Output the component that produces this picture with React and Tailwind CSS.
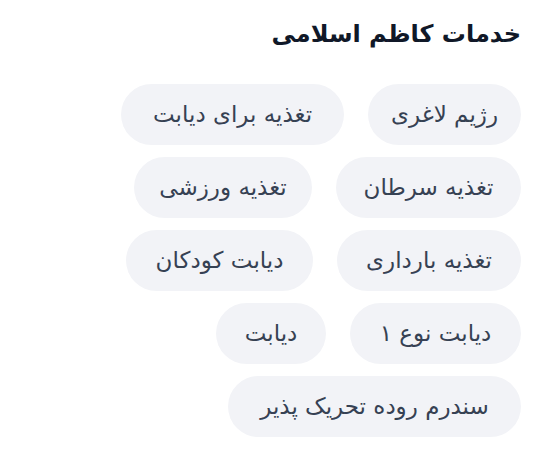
import React from 'react'

const services = [
  { name: 'رژیم لاغری', w: 'w-[153px]' },
  { name: 'تغذیه برای دیابت', w: 'w-[223px]' },
  { name: 'تغذیه سرطان', w: 'w-[185px]' },
  { name: 'تغذیه ورزشی', w: 'w-[178px]' },
  { name: 'تغذیه بارداری', w: 'w-[184px]' },
  { name: 'دیابت کودکان', w: 'w-[187px]' },
  { name: 'دیابت نوع ۱', w: 'w-[171px]' },
  { name: 'دیابت', w: 'w-[110px]' },
  { name: 'سندرم روده تحریک پذیر', w: 'w-[293px]' },
]

export default function App() {
  return (
    <div dir="rtl" className="min-h-screen bg-white px-[18px] pt-4" style={{ fontFamily: '"DejaVu Sans", sans-serif' }}>
      <h2 className="text-2xl leading-9 font-bold text-gray-900">خدمات کاظم اسلامی</h2>
      <div className="mt-8 flex max-w-[401px] flex-wrap gap-x-6 gap-y-3">
        {services.map((s) => (
          <span
            key={s.name}
            className={`${s.w} flex h-[61px] items-center justify-center rounded-full bg-[#f2f3f7] text-[23px] text-gray-700`}
          >
            {s.name}
          </span>
        ))}
      </div>
    </div>
  )
}
